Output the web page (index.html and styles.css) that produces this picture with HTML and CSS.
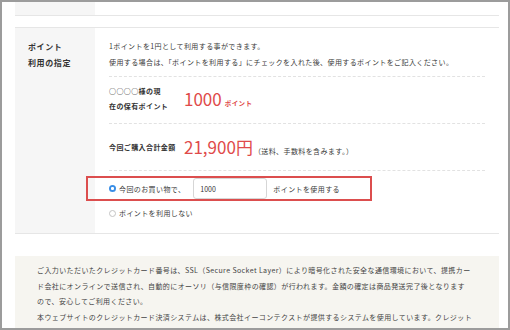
FILE: index.html
```html
<!DOCTYPE html>
<html lang="ja">
<head>
  <meta charset="UTF-8" />
  <meta name="viewport" content="width=device-width, initial-scale=1.0"/>
  <title>ポイント利用の指定</title>
  <link rel="stylesheet" href="styles.css">
</head>
<body>

<div class="frame">

  <!-- previous row (cut off at top) -->
  <div class="row row-prev">
    <div class="row-head"></div>
    <div class="row-body"></div>
  </div>

  <!-- points -->
  <div class="row row-points">
    <div class="row-head">ポイント<br>利用の指定</div>
    <div class="row-body">
      <p class="intro">
        1ポイントを1円として利用する事ができます。<br>
        使用する場合は、「ポイントを利用する」にチェックを入れた後、使用するポイントをご記入ください。
      </p>

      <div class="line held">
        <div class="line-label">○○○○様の現<br>在の保有ポイント</div>
        <div class="amount"><span class="num">1000</span><span class="unit">ポイント</span></div>
      </div>

      <div class="line total">
        <div class="line-label">今回ご購入合計金額</div>
        <div class="amount"><span class="num">21,900円</span><span class="note">（送料、手数料を含みます。）</span></div>
      </div>

      <div class="use-box">
        <span class="radio checked"></span>
        <span>今回のお買い物で、</span>
        <input class="point-input" type="text" value="1000">
        <span>ポイントを使用する</span>
      </div>

      <div class="no-use">
        <span class="radio"></span>
        <span>ポイントを利用しない</span>
      </div>
    </div>
  </div>

  <!-- card notice -->
  <div class="notice">
    <p>ご入力いただいたクレジットカード番号は、SSL（Secure Socket Layer）により暗号化された安全な通信環境において、提携カード会社にオンラインで送信され、自動的にオーソリ（与信限度枠の確認）が行われます。金額の確定は商品発送完了後となります<br>ので、安心してご利用ください。</p>
    <p>本ウェブサイトのクレジットカード決済システムは、株式会社イーコンテクストが提供するシステムを使用しています。クレジットカード情報は当社には保存されず、安全に処理されます。</p>
  </div>

</div>

</body>
</html>
```

FILE: styles.css
```css
* {
  box-sizing: border-box;
  margin: 0;
  padding: 0;
}

body {
  font-family: "Noto Sans CJK JP", "Noto Sans", sans-serif;
  color: #3a3a3a;
  background: #fff;
}

.frame {
  height: 330px;
  border: 2px solid #9c9c9c;
  padding: 0 9px 0 13px;
  overflow: hidden;
}

.row {
  display: grid;
  grid-template-columns: 80px 1fr;
  border-bottom: 1px solid #e6e6e6;
}

.row-prev {
  height: 14px;
}

.row-points {
  margin-top: 11px;
  border-top: 1px solid #e6e6e6;
}

.row-head {
  background: #f6f6f6;
  padding: 11px 0 0 13px;
  font-size: 8px;
  font-weight: bold;
  letter-spacing: 0.6px;
  line-height: 16px;
  color: #333;
}

.row-points .row-body {
  padding: 10px 14px 12px 14px;
  font-size: 7px;
  letter-spacing: 0.4px;
}

.intro {
  line-height: 16px;
  padding-bottom: 6px;
  border-bottom: 1px dashed #e2e2e2;
}

.line {
  display: flex;
  align-items: center;
  border-bottom: 1px dashed #e2e2e2;
}

.held {
  padding: 7px 0 9px;
}

.total {
  padding: 11px 0 11px;
}

.line-label {
  width: 75px;
  font-weight: bold;
  line-height: 15px;
  color: #333;
}

.amount {
  display: flex;
  align-items: baseline;
}

.num {
  font-size: 17px;
  letter-spacing: 0;
  line-height: 24px;
  color: #e04a4a;
}

.unit {
  margin-left: 3px;
  font-size: 6.5px;
  font-weight: bold;
  color: #e04a4a;
}

.note {
  margin-left: 1px;
}

.use-box {
  display: flex;
  align-items: center;
  width: 286px;
  margin: 5px 0 0 -23px;
  padding-left: 21px;
  border: 2px solid #dc4e4e;
}

.point-input {
  width: 74px;
  height: 21px;
  margin: 0 6px 0 8px;
  padding-left: 6px;
  border: 1px solid #d6d6d6;
  border-radius: 3px;
  font-family: inherit;
  font-size: 7px;
  color: #333;
}

.no-use {
  display: flex;
  align-items: center;
  margin-top: 4px;
  line-height: 16px;
}

.radio {
  width: 7px;
  height: 7px;
  margin-right: 3px;
  border: 1px solid #c4c4c4;
  border-radius: 50%;
  background: #fff;
}

.radio.checked {
  border: none;
  background: radial-gradient(circle, #fff 0 1.3px, #3a8ee6 1.7px);
}

.notice {
  margin-top: 22px;
  padding: 7px 25px 0 22px;
  background: #f6f5f0;
  font-size: 7px;
  letter-spacing: 0.4px;
  line-height: 15.7px;
  color: #444;
  min-height: 100px;
}
```
